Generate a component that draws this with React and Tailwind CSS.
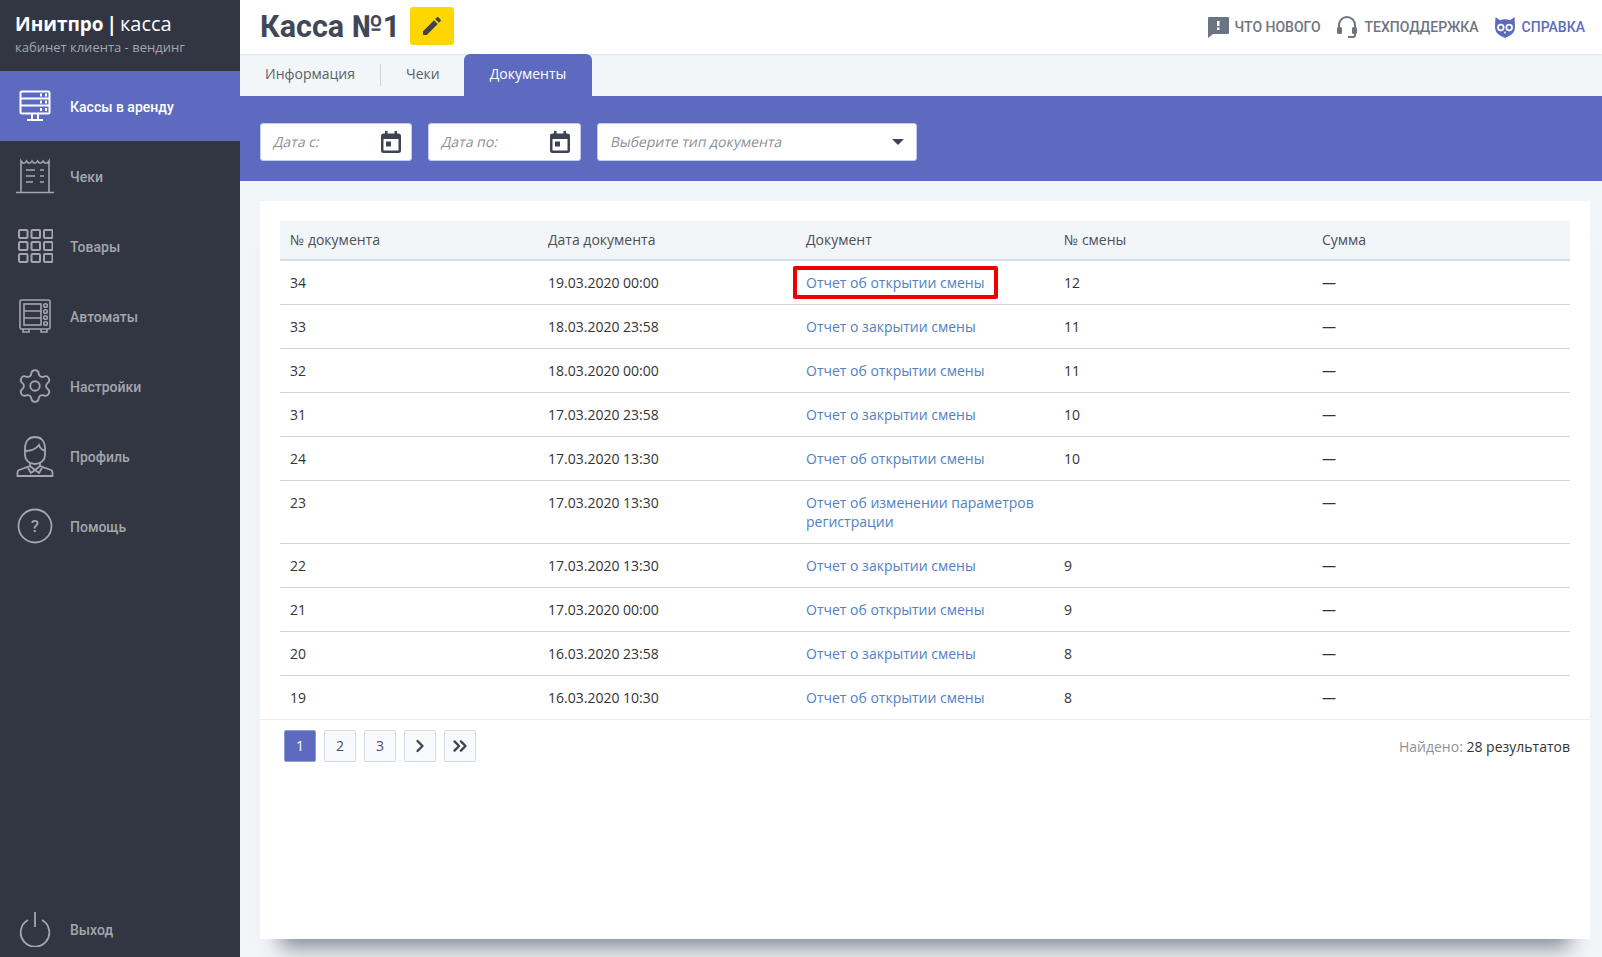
import React from "react";
import { Settings, ChevronRight, ChevronsRight } from "lucide-react";

const rows = [
  ["34", "19.03.2020 00:00", "Отчет об открытии смены", "12", "—", true],
  ["33", "18.03.2020 23:58", "Отчет о закрытии смены", "11", "—"],
  ["32", "18.03.2020 00:00", "Отчет об открытии смены", "11", "—"],
  ["31", "17.03.2020 23:58", "Отчет о закрытии смены", "10", "—"],
  ["24", "17.03.2020 13:30", "Отчет об открытии смены", "10", "—"],
  ["23", "17.03.2020 13:30", "Отчет об изменении параметров регистрации", "", "—"],
  ["22", "17.03.2020 13:30", "Отчет о закрытии смены", "9", "—"],
  ["21", "17.03.2020 00:00", "Отчет об открытии смены", "9", "—"],
  ["20", "16.03.2020 23:58", "Отчет о закрытии смены", "8", "—"],
  ["19", "16.03.2020 10:30", "Отчет об открытии смены", "8", "—"],
];

const s = { fill: "none", stroke: "currentColor", strokeWidth: 1.6 };

const ServerIcon = () => (
  <svg width="32" height="32" viewBox="0 0 32 32" {...s}>
    <rect x="1.500" y="1.500" width="29" height="22" rx="1.500" strokeWidth="2" />
    <path d="M1.500 8.500h29M1.500 15.500h29M13 24v5M19 24v5M8 30h16" strokeWidth="2" />
    <path d="M21 5h2M26 5h2M21 12h2M26 12h2M21 19.500h2M26 19.500h2" strokeWidth="3" />
  </svg>
);
const ReceiptIcon = () => (
  <svg width="40" height="36" viewBox="0 0 40 36" {...s}>
    <path d="M6 34V3c2 3 4 3 5.500 0 2 3 4 3 5.500 0 2 3 4 3 5.500 0 2 3 4 3 5.500 0 2 3 4 3 6 0v31" />
    <path d="M1 34.500h38" />
    <path d="M11 12h9M11 18h9M11 24h7M25 12h4M25 18h4M25 24h4" />
  </svg>
);
const GridIcon = () => (
  <svg width="36" height="36" viewBox="0 0 36 36" {...s} strokeWidth="2">
    {[2, 14, 26].flatMap((y) =>
      [2, 14.5, 27].map((x) => <rect key={`${x}-${y}`} x={x} y={y} width="8.500" height="8" rx="1" />)
    )}
  </svg>
);
const VendingIcon = () => (
  <svg width="34" height="36" viewBox="0 0 34 36" {...s}>
    <rect x="2" y="2" width="30" height="29" rx="1.500" />
    <rect x="6" y="6" width="17" height="21" />
    <path d="M6 13h17M6 20h17M5 31v3h6v-3M23 31v3h6v-3" />
    <circle cx="27.500" cy="7.500" r="1.800" />
    <circle cx="27.500" cy="13.500" r="1.800" />
    <circle cx="27.500" cy="19.500" r="1.800" />
    <circle cx="27.500" cy="25.500" r="1.800" />
  </svg>
);
const ProfileIcon = () => (
  <svg width="38" height="42" viewBox="0 0 38 42" {...s} strokeWidth="1.800">
    <path d="M9 14c0-8 4-12 10-12s10 4 10 12v6c0 5-4 9-10 9s-10-4-10-9z" />
    <path d="M9 16c6 0 11-2 14-6 1 3 3 5 6 6" />
    <path d="M14 28v3l-11 4c-1 .5-1.500 1-1.500 2.500V41h35v-3.500c0-1.500-.5-2-1.500-2.500l-11-4v-3" />
    <path d="M14 31l5 4 5-4M19 35l-4 3-3-5M19 35l4 3 3-5" />
  </svg>
);
const HelpIcon = () => (
  <svg width="36" height="36" viewBox="0 0 36 36" {...s}>
    <circle cx="18" cy="18" r="16.500" strokeWidth="1.800" />
    <text x="18" y="24" textAnchor="middle" fontSize="17" fill="currentColor" stroke="none" fontFamily="Roboto, sans-serif">?</text>
  </svg>
);
const PowerIcon = () => (
  <svg width="32" height="36" viewBox="0 0 32 36" {...s} strokeWidth="1.800">
    <path d="M16 1v15" />
    <path d="M9 9a14.300 14.300 0 1 0 14 0" />
  </svg>
);

const Nav = ({ icon, label, active, short }) => (
  <div
    className={`flex items-center font-medium text-sm ${short ? "h-14" : "h-[70px]"} ${
      active ? "bg-[#5c6bc0] text-white" : "text-[#a3a6ae]"
    }`}
  >
    <div className="w-[70px] flex justify-center shrink-0">{icon}</div>
    <span className="pt-0.5">{label}</span>
  </div>
);

const CalendarIcon = () => (
  <svg width="20" height="22" viewBox="0 0 20 22" className="text-[#3d4352]">
    <path
      fill="currentColor"
      fillRule="evenodd"
      d="M4 0h2.500v2.500h7V0H16v2.500h1.500A2.500 2.500 0 0 1 20 5v14.500a2.500 2.500 0 0 1-2.500 2.500h-15A2.500 2.500 0 0 1 0 19.500V5a2.500 2.500 0 0 1 2.500-2.500H4zM2.500 8v11.500h15V8z"
    />
    <rect x="5" y="10.500" width="5" height="5" fill="currentColor" />
  </svg>
);

const Placeholder = ({ children }) => (
  <span className="inline-block -skew-x-12 text-sm text-[#8b8f97]">{children}</span>
);

const DateInput = ({ label, width }) => (
  <div className={`${width} h-[38px] bg-white border border-[#c5cbe8] rounded-[3px] flex items-center justify-between pl-[13px] pr-[10px]`}>
    <Placeholder>{label}</Placeholder>
    <CalendarIcon />
  </div>
);

const PageBtn = ({ children, active }) => (
  <div
    className={`w-8 h-8 flex items-center justify-center rounded-[2px] border text-sm ${
      active ? "bg-[#5c6bc0] border-[#8f9ad6] text-white" : "bg-[#f7f9fc] border-[#d3dae6] text-[#4a4f5c]"
    }`}
  >
    {children}
  </div>
);

export default function App() {
  return (
    <div className="flex h-[957px] overflow-hidden bg-[#f3f6f9] font-['Open_Sans',sans-serif] text-[#333]">
      <aside className="w-[240px] shrink-0 bg-[#323642] flex flex-col font-['Roboto',sans-serif]">
        <div className="h-[71px] pl-[15px] pt-[10px] font-['Open_Sans',sans-serif]">
          <div className="text-white text-[19px] leading-[28px] [word-spacing:-2px]">
            <span className="font-bold">Инитпро |</span> <span className="text-[20px]">касса</span>
          </div>
          <div className="text-[13px] leading-[18px] text-[#a3a6ae]">кабинет клиента - вендинг</div>
        </div>
        <Nav active icon={<ServerIcon />} label="Кассы в аренду" />
        <Nav icon={<ReceiptIcon />} label="Чеки" />
        <Nav icon={<GridIcon />} label="Товары" />
        <Nav icon={<VendingIcon />} label="Автоматы" />
        <Nav icon={<Settings size={38} strokeWidth={1.15} />} label="Настройки" />
        <Nav icon={<ProfileIcon />} label="Профиль" />
        <Nav icon={<HelpIcon />} label="Помощь" />
        <div className="mt-auto">
          <Nav short icon={<PowerIcon />} label="Выход" />
        </div>
      </aside>

      <main className="flex-1 min-w-0 flex flex-col">
        <header className="h-[54px] shrink-0 bg-white shadow-[0_1px_2px_rgba(60,70,85,0.12)] flex items-center pl-5 pr-[17px] font-['Roboto',sans-serif]">
          <h1 className="text-[30.500px] font-bold text-[#414756] leading-none">Касса №1</h1>
          <button className="ml-[10px] mb-[2px] w-11 h-[38px] bg-[#ffd600] rounded-[3px] flex items-center justify-center">
            <svg width="24" height="24" viewBox="0 0 24 24" fill="#3d4352">
              <path d="M3 17.250V21h3.750L17.810 9.940l-3.750-3.750L3 17.250zM20.710 7.040c.39-.39.39-1.020 0-1.410l-2.340-2.340c-.39-.39-1.020-.39-1.410 0l-1.830 1.830 3.750 3.750 1.830-1.830z" />
            </svg>
          </button>
          <div className="ml-auto flex items-center text-sm font-medium text-[#6f7480]">
            <svg width="22" height="22" viewBox="0 0 22 22" className="mr-[6px]">
              <path fill="#6b7485" d="M2 1h19a1 1 0 0 1 1 1v15a1 1 0 0 1-1 1H6l-5 4V2a1 1 0 0 1 1-1z" />
              <rect x="10" y="5" width="2.500" height="5" fill="#fff" />
              <rect x="10" y="11.500" width="2.500" height="2.500" fill="#fff" />
            </svg>
            <span>ЧТО НОВОГО</span>
            <svg width="20" height="22" viewBox="0 0 20 22" className="ml-[16px] mr-[8px]" fill="none">
              <path d="M2 13V9a8 8 0 0 1 16 0v10a2 2 0 0 1-2 2h-5" stroke="#6f7480" strokeWidth="2" />
              <rect x="0" y="11" width="5" height="7" rx="1.500" fill="#6f7480" />
              <rect x="15" y="11" width="5" height="7" rx="1.500" fill="#6f7480" />
            </svg>
            <span>ТЕХПОДДЕРЖКА</span>
            <svg width="22" height="22" viewBox="0 0 22 22" className="ml-[15px] mr-[6px]">
              <path fill="#5c6bc0" d="M1.500 1 6 4.200c3.200-1.200 6.800-1.200 10 0L20.500 1 21 11c0 4-2 7-5 8.500L11 22l-5-2.500C3 18 1 15 1 11z" />
              <circle cx="6.800" cy="11.500" r="3.700" fill="#fff" />
              <circle cx="15.200" cy="11.500" r="3.700" fill="#fff" />
              <circle cx="6.800" cy="11.500" r="1.900" fill="#5c6bc0" />
              <circle cx="15.200" cy="11.500" r="1.900" fill="#5c6bc0" />
              <path fill="#fff" d="M9.800 15.800h2.400L11 18z" />
            </svg>
            <span className="text-[#5c6bc0]">СПРАВКА</span>
          </div>
        </header>

        <nav className="h-[42px] shrink-0 flex text-sm text-[#5b5f68]">
          <div className="relative pl-[25px] pr-[26px] pb-[3px] flex items-center">
            Информация
            <span className="absolute right-0 top-[10px] h-[22px] w-px bg-[#cfd4da]" />
          </div>
          <div className="pl-[25px] pr-[24px] pb-[3px] flex items-center">Чеки</div>
          <div className="px-[26px] pb-[2px] flex items-center bg-[#5c6bc0] text-white rounded-t-[6px]">Документы</div>
        </nav>

        <section className="h-[85px] shrink-0 bg-[#5c6bc0] flex items-start gap-4 px-5 pt-[27px]">
          <DateInput label="Дата с:" width="w-[152px]" />
          <DateInput label="Дата по:" width="w-[153px]" />
          <div className="w-[320px] h-[38px] bg-white border border-[#c5cbe8] rounded-[3px] flex items-center justify-between pl-[13px] pr-3">
            <Placeholder>Выберите тип документа</Placeholder>
            <span className="w-0 h-0 border-x-[6px] border-x-transparent border-t-[6px] border-t-[#3d4352]" />
          </div>
        </section>

        <div className="flex-1 min-h-0 pt-5 pl-5 pr-3 pb-[18px]">
          <div className="h-full bg-white flex flex-col shadow-[0_29px_20px_-20px_rgba(60,70,85,0.6)]">
            <div className="px-5 pt-5">
              <table className="w-full table-fixed text-sm leading-[19px]">
                <thead>
                  <tr className="bg-[#f3f6f9] border-b-2 border-[#d5dbe3] text-[#4b4f58] text-left">
                    {["№ документа", "Дата документа", "Документ", "№ смены", "Сумма"].map((h) => (
                      <th key={h} className="font-normal px-[10px] pb-[2px] h-[39px] align-middle">{h}</th>
                    ))}
                  </tr>
                </thead>
                <tbody>
                  {rows.map((r, i) => (
                    <tr key={r[0]} className={i < rows.length - 1 ? "border-b border-[#ced5dd]" : ""}>
                      <td className="px-[10px] py-3 align-top">{r[0]}</td>
                      <td className="px-[10px] py-3 align-top">{r[1]}</td>
                      <td className="px-[10px] py-3 align-top text-[#5280c4]">
                        <span className="relative">
                          {r[2]}
                          {r[5] && (
                            <span className="absolute -left-[13px] -right-[13px] -top-[7px] -bottom-[7px] border-4 border-[#ee0000] rounded-[2px]" />
                          )}
                        </span>
                      </td>
                      <td className="px-[10px] py-3 align-top">{r[3]}</td>
                      <td className="px-[10px] py-3 align-top">{r[4]}</td>
                    </tr>
                  ))}
                </tbody>
              </table>
            </div>
            <div className="border-t border-[#eceef0] flex items-start justify-between pt-[10px] pl-6 pr-5 text-sm">
              <div className="flex gap-2">
                <PageBtn active>1</PageBtn>
                <PageBtn>2</PageBtn>
                <PageBtn>3</PageBtn>
                <PageBtn><ChevronRight size={20} strokeWidth={2.8} className="text-[#3d4352]" /></PageBtn>
                <PageBtn><ChevronsRight size={22} strokeWidth={2.6} className="text-[#3d4352]" /></PageBtn>
              </div>
              <div className="leading-8 pt-px">
                <span className="text-[#8f9298]">Найдено:</span> <span className="text-[#333]">28 результатов</span>
              </div>
            </div>
          </div>
        </div>
      </main>
    </div>
  );
}
